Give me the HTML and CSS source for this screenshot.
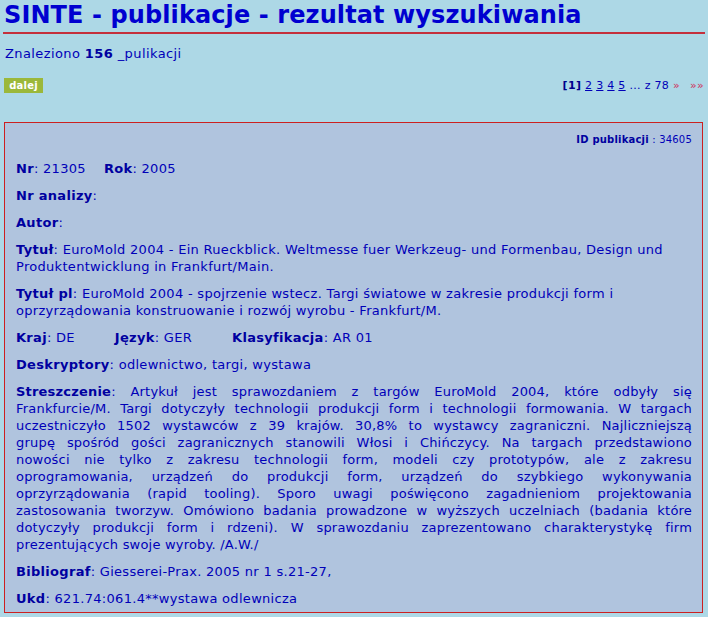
FILE: index.html
```html
<!DOCTYPE html>
<html lang="pl">
<head>
<meta charset="utf-8">
<title>SINTE - publikacje - rezultat wyszukiwania</title>
<link rel="stylesheet" href="styles.css">
</head>
<body>
<h1 class="title">SINTE - publikacje - rezultat wyszukiwania</h1>
<p class="found">Znaleziono <b>156</b> _pulikacji</p>
<div class="bar">
  <a class="btn" href="#">dalej</a>
  <div class="pager"><b>[1]</b> <a href="#">2</a> <a href="#">3</a> <a href="#">4</a> <a href="#">5</a> ... z 78 <a class="arr" href="#">»</a><a class="arr far" href="#">»»</a></div>
</div>
<div class="panel">
  <div class="pid"><b>ID publikacji</b> : 34605</div>
  <p class="row first"><b>Nr</b>: 21305<span class="sep"></span><b>Rok</b>: 2005</p>
  <p class="row"><b>Nr analizy</b>:</p>
  <p class="row"><b>Autor</b>:</p>
  <p class="row"><b>Tytuł</b>: EuroMold 2004 - Ein Rueckblick. Weltmesse fuer Werkzeug- und Formenbau, Design und Produktentwicklung in Frankfurt/Main.</p>
  <p class="row"><b>Tytuł pl</b>: EuroMold 2004 - spojrzenie wstecz. Targi światowe w zakresie produkcji form i oprzyrządowania konstruowanie i rozwój wyrobu - Frankfurt/M.</p>
  <p class="row"><b>Kraj</b>: DE<span class="gap"></span><b>Język</b>: GER<span class="gap"></span><b>Klasyfikacja</b>: AR 01</p>
  <p class="row"><b>Deskryptory</b>: odlewnictwo, targi, wystawa</p>
  <p class="row just"><span class="ln"><b>Streszczenie</b>: Artykuł jest sprawozdaniem z targów EuroMold 2004, które odbyły się</span>
    <span class="ln">Frankfurcie/M. Targi dotyczyły technologii produkcji form i technologii formowania. W targach</span>
    <span class="ln">uczestniczyło 1502 wystawców z 39 krajów. 30,8% to wystawcy zagraniczni. Najliczniejszą</span>
    <span class="ln">grupę spośród gości zagranicznych stanowili Włosi i Chińczycy. Na targach przedstawiono</span>
    <span class="ln">nowości nie tylko z zakresu technologii form, modeli czy prototypów, ale z zakresu</span>
    <span class="ln">oprogramowania, urządzeń do produkcji form, urządzeń do szybkiego wykonywania</span>
    <span class="ln">oprzyrządowania (rapid tooling). Sporo uwagi poświęcono zagadnieniom projektowania</span>
    <span class="ln">zastosowania tworzyw. Omówiono badania prowadzone w wyższych uczelniach (badania które</span>
    <span class="ln">dotyczyły produkcji form i rdzeni). W sprawozdaniu zaprezentowano charakterystykę firm</span>
    <span class="ln last">prezentujących swoje wyroby. /A.W./</span></p>
  <p class="row"><b>Bibliograf</b>: Giesserei-Prax. 2005 nr 1 s.21-27,</p>
  <p class="row"><b>Ukd</b>: 621.74:061.4**wystawa odlewnicza</p>
</div>
</body>
</html>
```
FILE: styles.css
```css
html, body {
  margin: 0;
  padding: 0;
}
body {
  background: #add8e6;
  color: #0000b8;
  font-family: "DejaVu Sans", Verdana, sans-serif;
  font-size: 13px;
  letter-spacing: 0.3px;
  line-height: 17px;
  padding: 0 5px 0 4px;
}
.title {
  margin: 0 -2px 0 -1px;
  padding: 1px 0 3px 1px;
  font-size: 24px;
  letter-spacing: 0.1px;
  line-height: 28px;
  font-weight: bold;
  color: #0000d0;
  border-bottom: 2px solid #c4303c;
}
.found {
  margin: 13px 0 0 1px;
  line-height: 14px;
  letter-spacing: 0.4px;
}
.found b {
  color: #0000a0;
}
.bar {
  margin-top: 17px;
  display: flex;
  justify-content: space-between;
  align-items: flex-start;
}
.btn {
  display: block;
  width: 39px;
  height: 15px;
  background: #9bb83a;
  color: #ffffff;
  font-size: 10px;
  letter-spacing: 0.2px;
  line-height: 15px;
  font-weight: bold;
  text-align: center;
  text-decoration: none;
}
.pager {
  font-size: 11px;
  letter-spacing: 0.3px;
  line-height: 15px;
  color: #0000b8;
  margin-right: -1px;
}
.pager b {
  color: #00008c;
}
.pager a {
  color: #0000b8;
}
.pager a.arr {
  color: #d0305a;
  text-decoration: none;
}
.pager a.far {
  margin-left: 10px;
}
.panel {
  margin-top: 29px;
  background: #b0c4de;
  border: 1px solid #cc2020;
  padding: 10px 10px 5px 11px;
}
.pid {
  text-align: right;
  font-size: 10px;
  letter-spacing: 0.2px;
  line-height: 14px;
}
.pid b {
  color: #0000a0;
}
.row {
  margin: 10px 0 0;
}
.row.first {
  margin-top: 13px;
}
.row b {
  color: #0000a0;
}
.just .ln {
  display: block;
  letter-spacing: 0.2px;
  text-align: justify;
  text-align-last: justify;
}
.just .ln.last {
  text-align-last: auto;
}
.sep {
  display: inline-block;
  width: 18px;
}
.gap {
  display: inline-block;
  width: 40px;
}
```
